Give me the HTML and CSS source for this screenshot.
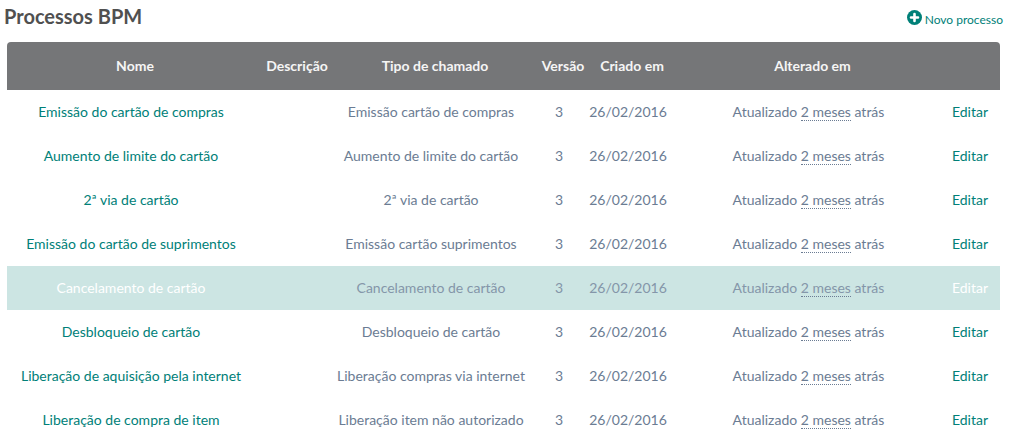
FILE: index.html
```html
<!DOCTYPE html>
<html lang="pt-BR">
<head>
<meta charset="utf-8">
<title>Processos BPM</title>
<link rel="stylesheet" href="styles.css">
</head>
<body>
<header class="page-header">
  <h1 class="title">Processos BPM</h1>
  <a class="new-link" href="#"><svg class="icon" viewBox="0 0 15 15" aria-hidden="true"><circle cx="7.5" cy="7.5" r="7.5" fill="currentColor"/><path d="M7.5 4v7M4 7.5h7" stroke="#fff" stroke-width="2.6" stroke-linecap="round"/></svg>Novo processo</a>
</header>
<main class="content">
<table class="processes">
  <colgroup><col class="c-name"><col class="c-desc"><col class="c-type"><col class="c-ver"><col class="c-created"><col class="c-changed"><col class="c-edit"></colgroup>
  <thead><tr><th>Nome</th><th>Descrição</th><th>Tipo de chamado</th><th>Versão</th><th>Criado em</th><th>Alterado em</th><th></th></tr></thead>
  <tbody>
    <tr><td><a href="#">Emissão do cartão de compras</a></td><td></td><td>Emissão cartão de compras</td><td>3</td><td>26/02/2016</td><td>Atualizado <abbr>2 meses</abbr> atrás</td><td><a href="#">Editar</a></td></tr>
    <tr><td><a href="#">Aumento de limite do cartão</a></td><td></td><td>Aumento de limite do cartão</td><td>3</td><td>26/02/2016</td><td>Atualizado <abbr>2 meses</abbr> atrás</td><td><a href="#">Editar</a></td></tr>
    <tr><td><a href="#">2ª via de cartão</a></td><td></td><td>2ª via de cartão</td><td>3</td><td>26/02/2016</td><td>Atualizado <abbr>2 meses</abbr> atrás</td><td><a href="#">Editar</a></td></tr>
    <tr><td><a href="#">Emissão do cartão de suprimentos</a></td><td></td><td>Emissão cartão suprimentos</td><td>3</td><td>26/02/2016</td><td>Atualizado <abbr>2 meses</abbr> atrás</td><td><a href="#">Editar</a></td></tr>
    <tr class="active"><td><a href="#">Cancelamento de cartão</a></td><td></td><td>Cancelamento de cartão</td><td>3</td><td>26/02/2016</td><td>Atualizado <abbr>2 meses</abbr> atrás</td><td><a href="#">Editar</a></td></tr>
    <tr><td><a href="#">Desbloqueio de cartão</a></td><td></td><td>Desbloqueio de cartão</td><td>3</td><td>26/02/2016</td><td>Atualizado <abbr>2 meses</abbr> atrás</td><td><a href="#">Editar</a></td></tr>
    <tr><td><a href="#">Liberação de aquisição pela internet</a></td><td></td><td>Liberação compras via internet</td><td>3</td><td>26/02/2016</td><td>Atualizado <abbr>2 meses</abbr> atrás</td><td><a href="#">Editar</a></td></tr>
    <tr><td><a href="#">Liberação de compra de item</a></td><td></td><td>Liberação item não autorizado</td><td>3</td><td>26/02/2016</td><td>Atualizado <abbr>2 meses</abbr> atrás</td><td><a href="#">Editar</a></td></tr>
  </tbody>
</table>
</main>
</body>
</html>
```
FILE: styles.css
```css
* { box-sizing: border-box; }
body { margin: 0; background: #fff; color: #6b7c93; font-family: Lato, sans-serif; font-size: 14px; line-height: 20px; }
a { color: #008078; text-decoration: none; }
.page-header { display: flex; justify-content: space-between; align-items: baseline; padding: 4px 9px 12px 4px; }
.title { margin: 0; font-size: 20px; line-height: 24px; font-weight: 700; color: #505050; }
.new-link { font-size: 12px; }
.icon { width: 15px; height: 15px; margin-right: 3px; vertical-align: -1px; }
.content { padding: 0 12px 0 7px; }
.processes { width: 100%; table-layout: fixed; border-collapse: separate; border-spacing: 0; text-align: center; }
.c-name { width: 256px; }
.c-desc { width: 68px; }
.c-type { width: 208px; }
.c-ver { width: 48px; }
.c-created { width: 90px; }
.c-edit { width: 52px; }
.processes th, .processes td { padding: 0; white-space: nowrap; }
.processes th { height: 48px; background: #757678; color: #f5f5f5; font-weight: 700; }
.processes th:first-child { border-top-left-radius: 4px; }
.processes th:last-child { border-top-right-radius: 4px; }
.processes td { height: 44px; padding-right: 8px; }
.processes abbr { border-bottom: 1px dotted #6b7c93; }
.active td { background: #cce5e3; color: #8496a9; }
.active a { color: #fff; }
```
